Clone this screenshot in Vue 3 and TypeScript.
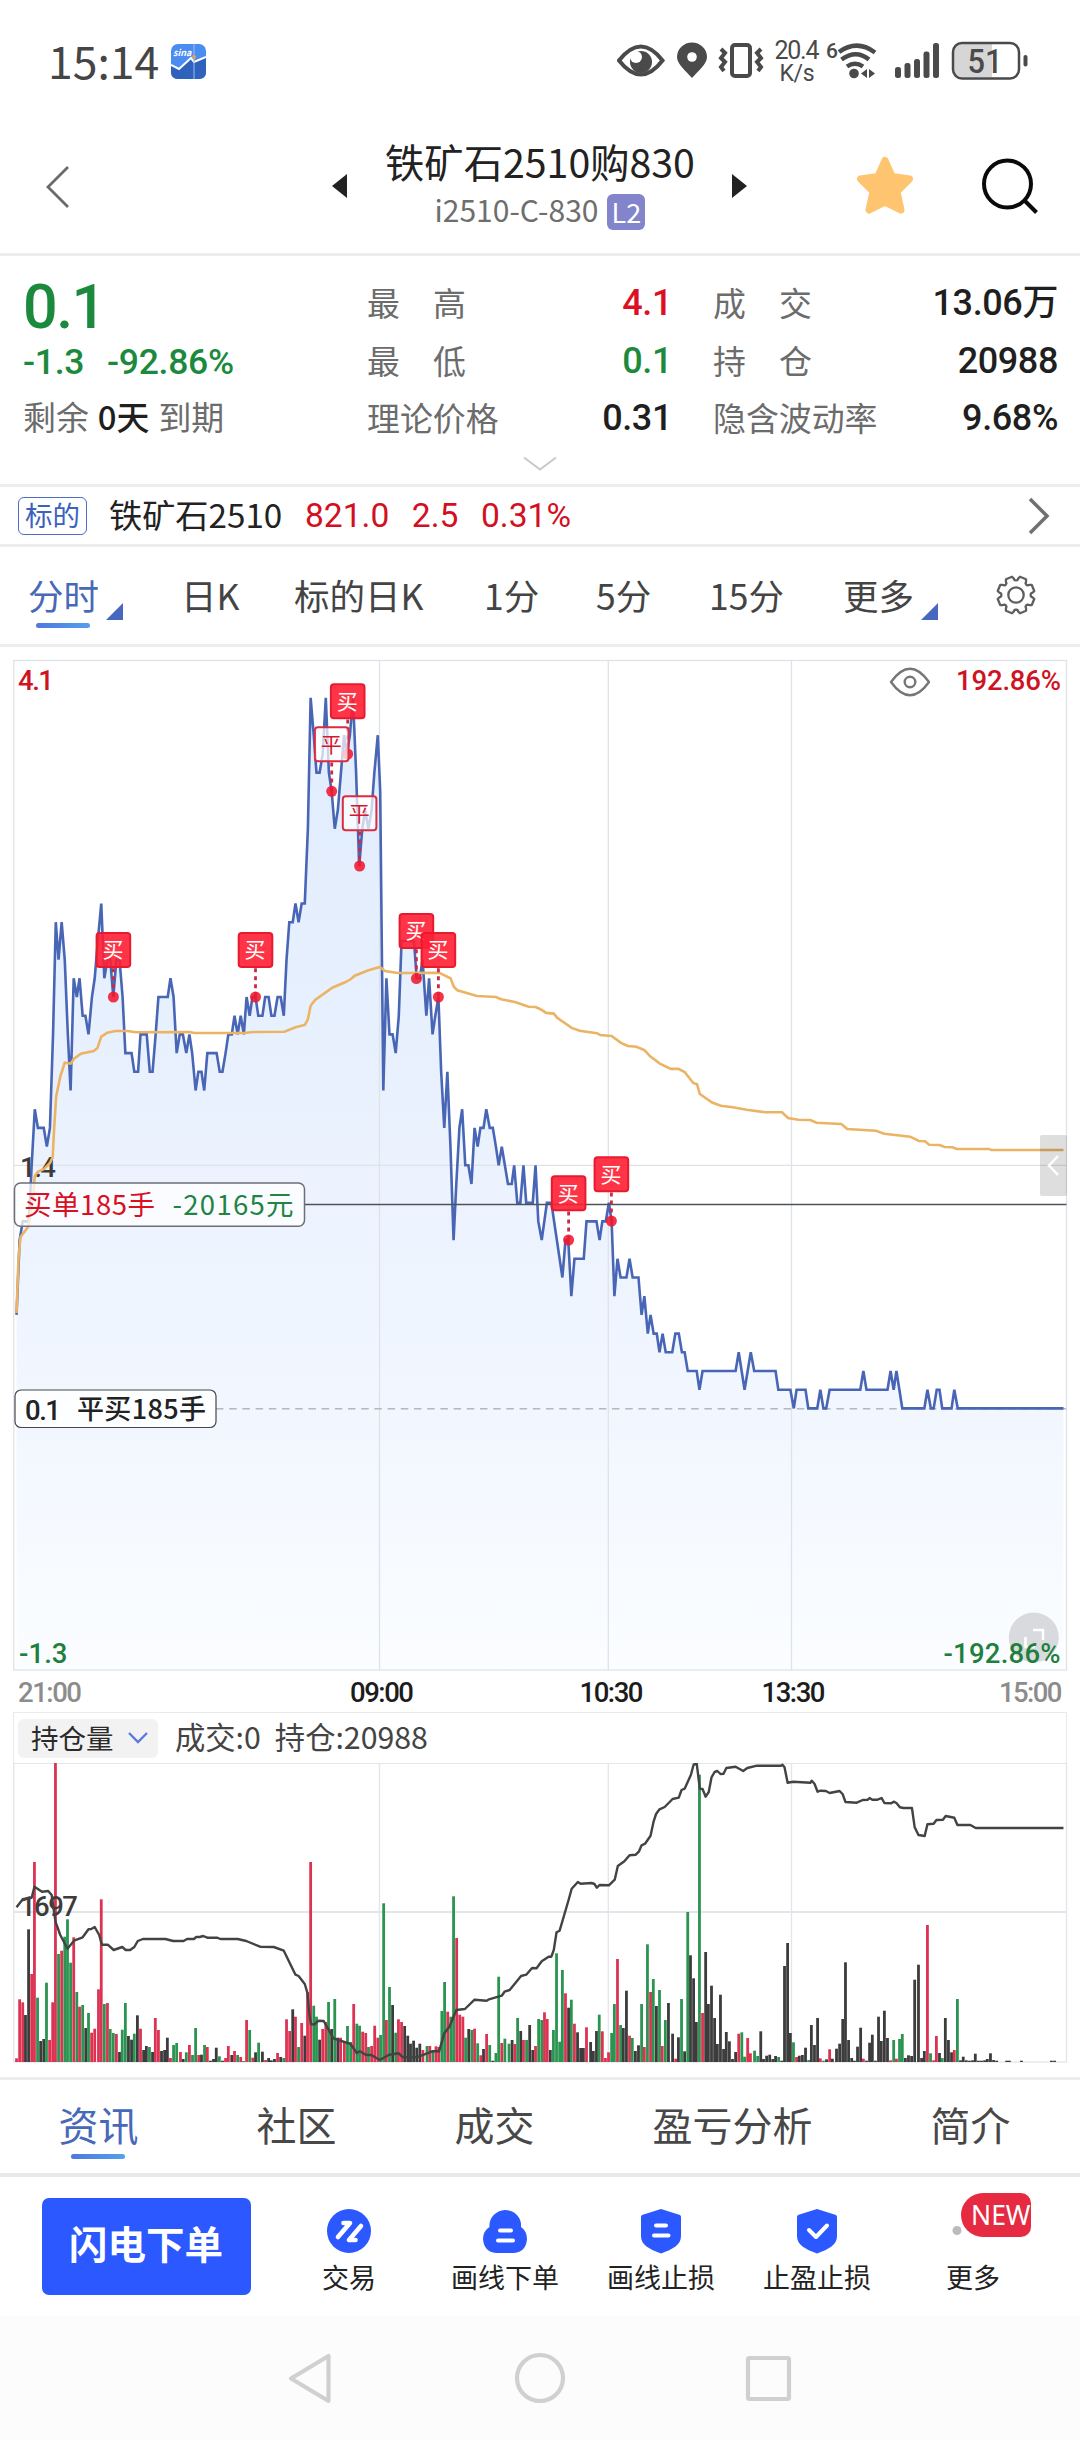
<script setup lang="ts">
interface Bar { x: number; y: number; h: number; c: string }
interface Mark { x: number; box: number; dot: number; kind: 'buy' | 'close' }
interface Tab { label: string; active?: boolean; corner?: boolean }

/* horizontal sampling: 3136 steps over the 1080px width */
const STEP = 1080 / 3136
const px = (v: number) => +(v * STEP).toFixed(2)
const pairs = (s: string): number[][] => s.trim().split(/\s+/).map(p => p.split(':').map(Number))

/* time:price */
const priceData = `48:.6 57:1 66:1.1 84:1.1 92:1.4 101:1.7 110:1.6 127:1.6 136:1.5 145:1.6 154:2.1 162:2.7 170:2.5 179:2.7 188:2.5 197:2.1
205:1.8 214:2.4 223:2.3 231:2.4 240:2.2 248:2.2 257:2.1 267:2.3 275:2.4 284:2.6 294:2.8 303:2.4 312:2.5 320:2.5 329:2.3 338:2.5 347:2.5
356:2.3 364:2 382:2 390:1.9 401:1.9 408:2.1 426:2.1 435:1.9 443:1.9 452:2.1 460:2.3 487:2.3 495:2.4 504:2.3 513:2 522:2.1 531:2.1 541:2
550:2.1 558:2 568:1.8 576:1.9 585:1.9 593:1.8 602:2 629:2 638:1.9 646:1.9 655:2 663:2.1 673:2.1 681:2.2 690:2.1 699:2.2 708:2.1 716:2.3
725:2.2 733:2.3 742:2.3 750:2.2 762:2.2 770:2.3 780:2.3 788:2.2 797:2.2 806:2.3 815:2.3 824:2.2 832:2.5 840:2.7 850:2.7 858:2.8 867:2.7
876:2.8 885:2.8 894:3.2 902:3.9 911:3.7 919:3.5 928:3.5 937:3.6 946:3.9 955:3.5 963:3.4 972:3.2 981:3.3 990:3.5 999:3.7 1007:3.6 1016:3.7
1025:3.9 1034:3.5 1043:3 1052:3.2 1060:3.3 1070:3.2 1079:3.3 1087:3.5 1097:3.7 1104:3.4 1113:1.8 1122:2.4 1131:2.1 1140:2.1 1149:2
1158:2.2 1166:2.6 1202:2.6 1210:2.4 1219:2.4 1227:2.5 1238:2.2 1246:2.4 1256:2.1 1264:2.2 1273:2.3 1281:1.9 1290:1.6 1299:1.9 1308:1.5
1317:1 1325:1.3 1334:1.6 1342:1.7 1351:1.4 1360:1.4 1369:1.3 1378:1.6 1387:1.5 1395:1.6 1404:1.6 1412:1.7 1422:1.6 1431:1.6 1440:1.5
1448:1.4 1457:1.5 1466:1.4 1475:1.3 1486:1.3 1493:1.4 1502:1.2 1511:1.2 1520:1.4 1528:1.2 1547:1.2 1555:1.4 1563:1.1 1573:1 1588:1.2
1601:1.2 1633:.8 1642:1 1650:1 1659:.7 1668:.9 1695:.9 1703:1.1 1732:1.1 1741:1 1749:1.1 1759:1.1 1768:1.2 1776:1.1 1784:.7 1793:.9
1802:.8 1819:.8 1828:.9 1837:.8 1854:.8 1863:.6 1871:.7 1881:.5 1889:.6 1898:.5 1907:.5 1915:.4 1924:.5 1933:.4 1952:.4 1961:.5 1971:.5
1980:.4 1988:.4 1997:.3 2023:.3 2031:.2 2040:.3 2136:.3 2145:.4 2162:.2 2180:.4 2190:.3 2252:.3 2260:.2 2295:.2 2305:.1 2313:.2 2339:.2
2347:.1 2373:.1 2382:.2 2391:.1 2399:.1 2409:.2 2498:.2 2507:.3 2516:.2 2577:.2 2586:.3 2595:.2 2603:.3 2620:.1 2684:.1 2693:.2 2703:.1
2711:.1 2720:.2 2728:.2 2736:.1 2763:.1 2771:.2 2781:.1 3088:.1`

/* time:vertical position */
const averageData = `48:1313 54:1256.7 60:1236.7 82:1226.7 95:1200 101:1176 110:1171.7 128:1169 145:1163 153:1157 157:1130 163:1096.7
175:1076.7 188:1062.7 205:1063.7 215:1058.7 235:1053.7 272:1051 283:1048 294:1036.7 312:1032.7 335:1031 370:1031 395:1032.3 550:1032
565:1033 710:1033 735:1032 826:1031.7 858:1027.3 885:1025 894:1019.3 902:1005.7 915:1000 965:987.7 1002:982.3 1018:979.3 1030:975.7
1070:970.3 1103:967 1118:971 1155:973 1275:972.7 1308:978.3 1318:986.7 1328:990.3 1385:996 1440:997 1455:999.3 1495:1002 1535:1006.7
1555:1007 1568:1009 1586:1012.9 1608:1013.6 1618:1017.9 1660:1027.9 1683:1030.7 1733:1033.2 1743:1035 1776:1036 1803:1042.9 1823:1046
1848:1046.8 1871:1050 1888:1056.4 1916:1063.6 1948:1068.9 1970:1068.9 1988:1072 2013:1083 2024:1084.3 2032:1094 2068:1102.5 2093:1105.7
2128:1107.3 2168:1109.7 2223:1112.3 2271:1112.3 2288:1118 2318:1119.7 2353:1120 2371:1122.7 2443:1124 2460:1129 2543:1130.7 2568:1133.7
2643:1136.7 2668:1141 2686:1141.3 2698:1144.7 2728:1145 2743:1147 2766:1147.3 2778:1149 2873:1149 2878:1150 3088:1150`

/* open interest, time:level */
const interestData = `48:922 66:898 92:893 100:860 122:875 140:873 150:885 161:965 175:1005 196:1046 215:1022 240:1012 257:988 265:987 275:981 288:1005
296:1034 313:1034 330:1050 355:1041 365:1050 378:1050 390:1041 400:1023 415:1017 480:1017 503:1023 533:1023 543:1017 563:1017 570:1011
580:1011 590:1008 602:1013 630:1013 640:1017 690:1017 715:1023 755:1040 795:1041 824:1052 858:1124 867:1128 885:1152 893:1180 898:1240
903:1272 912:1274 925:1262 940:1263 952:1285 968:1315 1018:1332 1036:1359 1045:1354 1062:1364 1078:1365 1103:1380 1130:1364 1158:1360
1170:1372 1210:1372 1255:1354 1275:1354 1290:1300 1305:1280 1325:1230 1350:1227 1378:1199 1413:1202 1420:1198 1457:1187 1465:1175 1480:1170
1513:1128 1528:1124 1545:1104 1558:1105 1573:1084 1593:1070 1601:1070 1608:1050 1616:997 1625:992 1651:900 1660:866 1678:846 1686:851
1718:849 1726:852 1733:863 1741:855 1768:856 1785:839 1794:798 1813:784 1828:766 1846:764 1855:755 1863:736 1873:731 1889:707 1898:664
1905:642 1915:628 1930:621 1953:597 1971:593 1979:570 1988:566 2006:525 2014:494 2023:490 2032:566 2040:567 2049:590 2058:576 2066:532
2075:516 2083:513 2092:522 2101:521 2109:504 2136:500 2158:513 2170:504 2198:497 2268:497 2272:494 2278:502 2287:548 2303:545 2353:548
2357:542 2365:551 2374:575 2383:572 2398:573 2409:579 2438:573 2447:583 2455:606 2488:608 2505:600 2520:599 2525:594 2533:599 2548:599
2560:594 2568:609 2588:610 2595:605 2603:609 2613:622 2623:624 2648:624 2656:682 2667:705 2685:708 2693:673 2711:671 2719:660 2738:659
2746:648 2771:653 2780:675 2818:675 2833:684 3088:684`

/* volume, time+colour+level: r rising, g falling, k flat */
const volumeData = `48r1375 57r1198 66r1207 74k1245 83k988 92r1122 100r786 109g1193 118k1323 127k1317 135g1148 144r1320 153r1207 161r486 170g1062
179r1052 188g1010 196g958 205g1088 214r1012 223g1176 231r1220 240g1215 249k1284 257g1239 266r1298 275r1286 286r1168 294r898 303g1212
312r1209 320g1287 329g1299 338r1302 347k1356 355g1289 364g1209 373k1308 382k1319 390g1301 399k1246 408r1286 417k1350 425k1338 434g1341
443k1356 451r1254 460r1290 469k1353 478k1350 486k1313 495r1374 504g1335 513g1329 524r1356 532k1377 541g1357 550r1335 559g1365 568g1284
577r1365 585k1364 594g1335 602r1341 611k1382 620k1377 628k1343 637g1369 646k1382 655r1374 663r1338 673k1365 681r1353 690g1365 699r1371
707g1383 716r1260 725g1290 734r1373 742k1357 751g1328 762k1355 771r1380 780k1374 788k1381 797k1377 806r1359 815k1371 824g1374 832r1258
841r1293 850k1228 858r1250 867g1341 876r1269 885k1307 893r1176 902r786 911g1217 919g1250 928k1319 937r1287 946r1266 954g1206 963k1287
972g1197 981k1313 989r1313 1000r1326 1009g1278 1018g1326 1027r1212 1036g1271 1044g1277 1053r1295 1062r1299 1070g1341 1079r1338 1088r1277
1097r1313 1105g1305 1114g910 1122r1260 1131g1161 1140k1215 1149g1298 1157r1258 1166r1266 1175k1278 1184k1307 1192k1331 1201k1322 1210k1343
1219k1331 1228r1350 1240g1338 1248r1338 1257g1350 1266r1339 1274r1341 1283g1233 1291g1146 1300r1235 1309g1250 1317g889 1326r1014 1335r1244
1344r1250 1352g1313 1361k1287 1370g1290 1378r1286 1387g1330 1396r1366 1404k1347 1413r1302 1422g1335 1431k1382 1440g1359 1448g1130
1457r1329 1466g1316 1478g1331 1487k1320 1495r1332 1503g1254 1512k1293 1520r1320 1529g1320 1538k1275 1547k1350 1555r1338 1564g1257
1573g1260 1581r1237 1589r1257 1598k1350 1607g1290 1616g1060 1625g1325 1633g1110 1642r1180 1651k1223 1659g1199 1668r1271 1677k1297
1686k1344 1694k1344 1703r1282 1715k1326 1723k1353 1732k1293 1740g1244 1749r1294 1758r1374 1767r1357 1776g1299 1784g1212 1793r1077
1802g1275 1810k1284 1819k1172 1828r1307 1836g1314 1845k1353 1854k1336 1863g1212 1871r1341 1880g1033 1889r1176 1897g1137 1906k1218
1915g1170 1923r1338 1932g1260 1941k1209 1953k1301 1962r1376 1970k1312 1979g1197 1988k1354 1997g936 2005k1066 2014k1135 2022k1266
2031g524 2040r1239 2049k1056 2057k1212 2066k1157 2075k1254 2083k1332 2092k1184 2101k1347 2109k1296 2118k1324 2127k1377 2136k1356
2145r1301 2154g1297 2162g1370 2171r1314 2179r1360 2191g1352 2200g1368 2209k1294 2217k1377 2226k1367 2235k1364 2244k1377 2252k1368
2261g1371 2270k1382 2278k1098 2287k1029 2295k1299 2304g1327 2313r1371 2321k1367 2330k1365 2339k1343 2348g1380 2356k1275 2365k1335
2374k1254 2382r1375 2391g1382 2400k1378 2409r1348 2417k1376 2429k1346 2438k1331 2447k1257 2455k1087 2464k1320 2473k1374 2481k1382
2490k1340 2499k1283 2507r1376 2516k1382 2525k1328 2533k1304 2542k1382 2551k1250 2559k1323 2568k1232 2577k1314 2586r1381 2595g1320
2603r1376 2612g1317 2620g1302 2629k1374 2638k1366 2647k1368 2656k1139 2667k1094 2676k1374 2684k1353 2693r975 2702g1360 2711r1381
2719r1308 2728k1359 2736g1374 2745k1254 2754k1320 2763k1357 2771r1350 2780g1197 2789k1381 2797k1370 2806k1381 2815k1382 2824k1381
2832k1361 2841k1382 2850k1382 2859k1381 2867k1377 2876k1360 2885k1380 2894k1382 2923k1382 2931k1382 2966k1382 3053k1382 3062k1382`

const colours: Record<string, string> = { r: '#dd3353', g: '#2b9450', k: '#3c3c3c' }
const priceY = (p: number) => +(1165.3 + (1.4 - p) * 187).toFixed(1)
const price = pairs(priceData).map(([t, p]) => `${px(t)},${priceY(p)}`).join(' ')
const area = `${px(48)},1670 ${price} ${px(3088)},1670`
const average = pairs(averageData).map(([t, y]) => `${px(t)},${y}`).join(' ')
const interest = pairs(interestData).map(([t, v]) => `${px(t)},${(1600 + v / 3).toFixed(1)}`).join(' ')
const bars: Bar[] = volumeData.trim().split(/\s+/).map(s => {
  const m = s.match(/(\d+)([rgk])(\d+)/)!
  const y = 1600 + Number(m[3]) / 3
  return { x: px(Number(m[1])) - 1.4, y: +y.toFixed(1), h: +(2062 - y).toFixed(1), c: colours[m[2]] }
})

const marks: Mark[] = [
  { x: 347.7, box: 683.5, dot: 754, kind: 'buy' },
  { x: 331.7, box: 726.5, dot: 791.3, kind: 'close' },
  { x: 359.6, box: 795.5, dot: 866, kind: 'close' },
  { x: 113.4, box: 932.3, dot: 997, kind: 'buy' },
  { x: 255.5, box: 932.3, dot: 997, kind: 'buy' },
  { x: 416.4, box: 913.3, dot: 978.6, kind: 'buy' },
  { x: 438.4, box: 932.3, dot: 997, kind: 'buy' },
  { x: 568.6, box: 1175.5, dot: 1240, kind: 'buy' },
  { x: 611.4, box: 1156.5, dot: 1221, kind: 'buy' },
]

const periods: Tab[] = [
  { label: '分时', active: true, corner: true }, { label: '日K' }, { label: '标的日K' },
  { label: '1分' }, { label: '5分' }, { label: '15分' }, { label: '更多', corner: true },
]
const sections: Tab[] = [
  { label: '资讯', active: true }, { label: '社区' }, { label: '成交' }, { label: '盈亏分析' }, { label: '简介' },
]
const actions = ['交易', '画线下单', '画线止损', '止盈止损', '更多']

const gear = (() => {
  const pts: string[] = []
  for (let i = 0; i < 8; i++) {
    for (const [d, r] of [[-14, 17], [-10, 18.7], [10, 18.7], [14, 17], [17, 15], [22.5, 14.6], [28, 15]]) {
      const a = ((i * 45 + 22.5 + d) * Math.PI) / 180
      pts.push(`${(20 + r * Math.sin(a)).toFixed(2)} ${(20 - r * Math.cos(a)).toFixed(2)}`)
    }
  }
  return `M${pts.join('L')}Z`
})()
</script>

<template>
  <main class="screen">
    <div class="status">
      <span class="clock">15:14</span>
      <svg class="app-icon" width="35" height="35" viewBox="0 0 35 35">
        <rect width="35" height="35" rx="7" fill="#4a8df0" />
        <path d="M0 21L8 25L20 14L23 18L35 13V28Q35 35 28 35H7Q0 35 0 28Z" fill="#2f62bd" />
        <path d="M0 21L8 25L20 14L23 18L35 13" fill="none" stroke="#fff" stroke-width="2" />
        <path d="M23 0V35" stroke="#9bbdf2" stroke-width="1" />
        <circle cx="23" cy="13" r="2" fill="#e9a157" />
        <text x="2" y="12" font-size="9" font-style="italic" font-weight="700" fill="#fff">sina</text>
      </svg>
      <svg class="sys" width="412" height="50" viewBox="617 36 412 50" fill="none" stroke="#4a4a4a">
        <path d="M619 60.500Q641 32.500 662.500 60.500Q641 88.500 619 60.500Z" stroke-width="4" />
        <circle cx="641" cy="62" r="11" fill="#4a4a4a" stroke="none" />
        <circle cx="636" cy="57" r="6" fill="#fff" stroke="none" />
        <path d="M692 78C686 71 677 64 677 57A15 14.500 0 0 1 707 57C707 64 698 71 692 78Z" fill="#4a4a4a" stroke="none" />
        <circle cx="692" cy="57" r="4.800" fill="#fff" stroke="none" />
        <rect x="732" y="45" width="18" height="31" rx="3" stroke-width="4" />
        <path d="M721 49l4 4l-4 5l4 4l-4 5l3 4M761 49l-4 4l4 5l-4 4l4 5l-3 4" stroke-width="4" />
        <g fill="#4a4a4a" stroke="none">
          <text x="774.500" y="59" font-size="25" textLength="45">20.4</text>
          <text x="779.500" y="81" font-size="23" textLength="35">K/s</text>
          <text x="826" y="58" font-size="21" font-weight="500" textLength="11">6</text>
          <circle cx="854" cy="73.500" r="4.800" />
          <path d="M867 69v9l-6-4.500zM869 69v9l6-4.500z" />
          <rect x="895" y="67" width="6" height="11" rx="2.500" />
          <rect x="904.500" y="63" width="6" height="15" rx="2.500" />
          <rect x="914" y="59" width="6" height="19" rx="2.500" />
          <rect x="923.500" y="51.500" width="6" height="26.500" rx="2.500" />
          <rect x="933" y="43" width="6" height="35" rx="2.500" />
          <path d="M962 44H992V77H962Q954 77 954 69V52Q954 44 962 44Z" fill="#d6d6d6" />
          <rect x="1023.500" y="55" width="4" height="11.500" rx="2" />
        </g>
        <path d="M839 52Q857 39 875 52.500M841.500 59.500Q856 49 869 59.500M847 66.500Q855 61 863 66.500" stroke-width="4.500" />
        <rect x="953" y="43" width="66" height="35.500" rx="9" stroke-width="2.500" />
        <text x="967.500" y="73" font-size="33" font-weight="500" fill="#4a4a4a" stroke="none" textLength="35" lengthAdjust="spacingAndGlyphs">51</text>
      </svg>
    </div>

    <header class="head">
      <svg class="back" width="26" height="44" viewBox="0 0 26 44"><path d="M23 2L3 22L23 42" fill="none" stroke="#6a6a6a" stroke-width="2.800" /></svg>
      <svg class="prev" width="16" height="26" viewBox="0 0 16 26"><path d="M15 1V25L0 13Z" fill="#222" /></svg>
      <div class="name">
        <h1>铁矿石2510购830</h1>
        <p><span>i2510-C-830</span><b>L2</b></p>
      </div>
      <svg class="next" width="16" height="26" viewBox="0 0 16 26"><path d="M0 1V25L15 13Z" fill="#222" /></svg>
      <svg class="star" width="60" height="60" viewBox="0 0 60 60"><path d="M30 4.500L37.200 20.500L54.500 23L42 35.500L46 54L30 46L14 54L18 35.500L5.500 23L22.800 20.500Z" fill="#ffc46f" stroke="#ffc46f" stroke-width="7" stroke-linejoin="round" /></svg>
      <svg class="search" width="60" height="60" viewBox="0 0 60 60" fill="none" stroke="#0a0a0a" stroke-width="4"><circle cx="27.500" cy="27" r="23.500" /><path d="M44 43L56.500 55.500" /></svg>
    </header>

    <section class="quote">
      <div class="q-left">
        <strong class="big">0.1</strong>
        <p class="chg"><span>-1.3</span><span>-92.86%</span></p>
        <p class="left-days">剩余<b>0天</b>到期</p>
      </div>
      <dl class="q-mid">
        <dt class="wide">最高</dt><dd class="up">4.1</dd>
        <dt class="wide">最低</dt><dd class="down">0.1</dd>
        <dt>理论价格</dt><dd>0.31</dd>
      </dl>
      <dl class="q-right">
        <dt class="wide">成交</dt><dd>13.06万</dd>
        <dt class="wide">持仓</dt><dd>20988</dd>
        <dt>隐含波动率</dt><dd>9.68%</dd>
      </dl>
      <svg class="fold" width="34" height="16" viewBox="0 0 34 16"><path d="M1 1.500L17 13.500L33 1.500" fill="none" stroke="#c9c9c9" stroke-width="2" /></svg>
    </section>

    <section class="under">
      <span class="badge">标的</span>
      <span class="u-name">铁矿石2510</span>
      <span class="u-num">821.0</span><span class="u-num">2.5</span><span class="u-num">0.31%</span>
      <svg width="22" height="38" viewBox="0 0 22 38"><path d="M2 2L19 19L2 36" fill="none" stroke="#707070" stroke-width="3.500" /></svg>
    </section>

    <nav class="periods">
      <div v-for="p in periods" :key="p.label" class="period" :class="{ on: p.active }">
        <span>{{ p.label }}</span>
        <svg v-if="p.corner" width="17" height="17" viewBox="0 0 17 17"><path d="M17 0V17H0Z" fill="#4868c0" /></svg>
      </div>
      <svg class="gear" width="40" height="40" viewBox="0 0 40 40" fill="none" stroke="#5f5f5f" stroke-width="2.300" stroke-linejoin="round"><path :d="gear" /><circle cx="20" cy="20" r="7.700" /></svg>
    </nav>

    <svg class="chart" width="1080" height="1065" viewBox="0 647 1080 1065">
      <defs>
        <linearGradient id="areaFill" gradientUnits="userSpaceOnUse" x1="0" y1="698" x2="0" y2="1670">
          <stop offset="0" stop-color="#e0ecfd" /><stop offset=".4" stop-color="#e9f1fe" />
          <stop offset=".75" stop-color="#f2f7ff" /><stop offset="1" stop-color="#fbfdff" />
        </linearGradient>
      </defs>
      <polygon :points="area" fill="url(#areaFill)" />
      <g stroke="#dfe3e8" stroke-width="1.300" fill="none">
        <rect x="13.800" y="660.500" width="1052.700" height="1009.500" />
        <path d="M379.500 660V1670M608.300 660V1670M791.500 660V1670M14 1165.300H1066" />
      </g>
      <path d="M216 1408.700H1066" stroke="#b4b7bb" stroke-width="1.500" stroke-dasharray="7.500 5.700" />
      <polyline :points="price" fill="none" stroke="#4866b5" stroke-width="2.600" stroke-linejoin="miter" stroke-miterlimit="2" />
      <text x="20" y="1177" textLength="36" class="num" fill="#3c3c3c">1.4</text>
      <polyline :points="average" fill="none" stroke="#ebb364" stroke-width="2.600" />
      <path d="M305 1204.500H1066.500" stroke="#4f5359" stroke-width="1.300" />
      <g v-for="(m, i) in marks" :key="i">
        <path :d="`M${m.x} ${m.box + 36}V${m.dot}`" stroke="#c92a48" stroke-width="2.800" stroke-dasharray="4 4" />
        <circle :cx="m.x" :cy="m.dot" r="5.500" fill="#f0182f" fill-opacity=".88" />
        <rect :x="m.x - 16.800" :y="m.box + .8" width="33.600" height="34" rx="3" stroke-width="2"
          :fill="m.kind === 'buy' ? '#ff1f33' : '#ffffff'" :fill-opacity="m.kind === 'buy' ? .9 : .72"
          :stroke="m.kind === 'buy' ? '#e81a30' : '#dc2c42'" />
        <text :x="m.x - .4" :y="m.box + 25" text-anchor="middle" font-size="21" :fill="m.kind === 'buy' ? '#fff' : '#d4182c'">{{ m.kind === 'buy' ? '买' : '平' }}</text>
      </g>
      <rect x="14.500" y="1183" width="290" height="43.300" rx="6" fill="#fff" fill-opacity=".75" stroke="#6c6f75" stroke-width="1.500" />
      <text x="24" y="1215" font-size="27.500" textLength="131" fill="#d9101f">买单185手</text>
      <text x="172.500" y="1215" font-size="27.500" textLength="121" fill="#218442">-20165元</text>
      <rect x="15" y="1390" width="201" height="37.500" rx="6" fill="#fff" fill-opacity=".85" stroke="#44474c" stroke-width="1.200" />
      <text x="25" y="1419.500" textLength="36" class="num" fill="#222">0.1</text>
      <text x="77" y="1419" font-size="27" font-weight="500" textLength="129" fill="#222">平买185手</text>
      <rect x="1040" y="1135" width="27" height="61" rx="2" fill="#000" fill-opacity=".13" />
      <path d="M1058 1156L1049 1165.500L1058 1175" fill="none" stroke="#fff" stroke-width="2.500" />
      <circle cx="1033.800" cy="1637.500" r="25" fill="#d9dade" />
      <path d="M1033 1630H1043V1640M1025.500 1637V1647H1035" fill="none" stroke="#fff" stroke-width="2.500" />
      <g class="num">
        <text x="18" y="690" textLength="36" fill="#cf1322">4.1</text>
        <text x="956" y="686" textLength="105" dy="4" fill="#cf1322">192.86%</text>
        <text x="19" y="1662.700" textLength="48.500" fill="#1f7f3c">-1.3</text>
        <text x="943.500" y="1662.700" textLength="117" fill="#1f7f3c">-192.86%</text>
        <text x="18" y="1702" textLength="64" fill="#8c8c8c">21:00</text>
        <text x="350" y="1702" textLength="64" fill="#1c1c1c">09:00</text>
        <text x="579.500" y="1702" textLength="64" fill="#1c1c1c">10:30</text>
        <text x="761.500" y="1702" textLength="64" fill="#1c1c1c">13:30</text>
        <text x="999" y="1702" textLength="63.500" fill="#8c8c8c">15:00</text>
      </g>
      <g fill="none" stroke="#767676" stroke-width="2.400"><path d="M891 682Q910 655.500 929 682Q910 708.500 891 682Z" stroke-linejoin="round" /><circle cx="910" cy="682" r="5.300" /></g>
    </svg>

    <div class="vol-head">
      <span class="chip"><i>持仓量</i><svg width="22" height="14" viewBox="0 0 22 14"><path d="M2 2L11 11L20 2" fill="none" stroke="#5b7bd8" stroke-width="2.400" /></svg></span>
      <span class="stat">成交:0</span><span class="stat">持仓:20988</span>
    </div>
    <svg class="volume" width="1080" height="314" viewBox="0 1763 1080 314">
      <g stroke="#e2e5e9" stroke-width="1.300" fill="none">
        <rect x="13.800" y="1763.300" width="1052.700" height="298.700" />
        <path d="M379.500 1763V2062M608.300 1763V2062M791.500 1763V2062" /><path d="M14 1912H1066" stroke-width="2" />
      </g>
      <rect v-for="(b, i) in bars" :key="i" :x="b.x" :y="b.y" width="2.800" :height="b.h" :fill="b.c" />
      <text x="20" y="1915.700" textLength="58" class="num" fill="#3c3c3c">1697</text>
      <polyline :points="interest" fill="none" stroke="#434343" stroke-width="2.400" stroke-linejoin="round" />
    </svg>

    <nav class="sections">
      <span v-for="s in sections" :key="s.label" :class="{ on: s.active }">{{ s.label }}</span>
    </nav>

    <footer class="actions">
      <button>闪电下单</button>
      <div v-for="(a, i) in actions" :key="a" class="action">
        <svg width="44" height="46" viewBox="0 0 44 46" fill="#2b58ff">
          <template v-if="i === 0"><circle cx="22" cy="23" r="22" /><g fill="none" stroke="#fff" stroke-width="4.600" stroke-linecap="round" stroke-linejoin="round"><path d="M11 29L23 15H16.500M34 18L22 32H28.500" /></g></template>
          <template v-else-if="i === 1"><path d="M22 2A16 15.500 0 0 1 38 19Q44 23 44 31Q43 44 31 45H13Q1 44 0 31Q0 23 6.500 19A16 15.500 0 0 1 22 2Z" /><path d="M17 22.500H28M15 32.500H30" stroke="#fff" stroke-width="4" stroke-linecap="round" /></template>
          <template v-else-if="i === 4"><circle cx="6" cy="22.500" r="4.500" fill="#bbb" /></template>
          <template v-else><path d="M22 1L41 7Q42 8 42 9V28C42 37 34 41 22 45.500C10 41 2 37 2 28V9Q2 8 3 7Z" />
            <path v-if="i === 2" d="M17 17.500H27M15 27.500H29.500" stroke="#fff" stroke-width="4" stroke-linecap="round" />
            <path v-else d="M14 22L21 29L32 17.500" fill="none" stroke="#fff" stroke-width="4" stroke-linecap="round" stroke-linejoin="round" /></template>
        </svg>
        <span>{{ a }}</span>
        <em v-if="i === 4">NEW</em>
      </div>
    </footer>

    <div class="sysnav">
      <svg width="504" height="56" viewBox="288 2350 504 56" fill="none" stroke="#d0d0d0" stroke-width="4.200" stroke-linejoin="round">
        <path d="M291 2378.500L328.500 2356V2401Z" /><circle cx="540" cy="2378" r="23" /><rect x="748" y="2358" width="41" height="41" rx="1.500" />
      </svg>
    </div>
  </main>
</template>

<style>
body { margin: 0; background: #fff; }
</style>

<style scoped>
.screen { width: 1080px; height: 2440px; overflow: hidden; background: #fff; color: #222; font-family: "Noto Sans CJK SC", "Noto Sans", sans-serif; display: flex; flex-direction: column; }
.screen > * { box-sizing: border-box; flex: none; }
h1, p, dl, dt, dd { margin: 0; font-weight: 400; }
svg { display: block; }
.status { height: 122px; display: flex; align-items: flex-start; padding: 36px 51px 0 48px; }
.clock { font-size: 44.500px; line-height: 47px; width: 123px; color: #454545; }
.app-icon { margin-top: 8px; }
.sys { margin-left: auto; font-family: Roboto, sans-serif; }
.head { height: 134px; border-bottom: 3px solid #ededed; display: flex; align-items: flex-start; }
.back { margin: 43px 0 0 45px; }
.prev { margin: 51px 0 0 261px; }
.name { width: 384px; text-align: center; }
.name h1 { font-size: 39.300px; line-height: 56px; margin-top: 11px; white-space: nowrap; }
.name p { font-size: 30px; line-height: 36px; margin-top: 5px; color: #6e6e6e; display: flex; justify-content: center; align-items: flex-start; gap: 9px; }
.name p span { line-height: 30px; }
.name b { font-weight: 400; font-size: 27px; width: 38px; height: 36px; line-height: 35px; border-radius: 6px; background: #8284cc; color: #fff; }
.next { margin-top: 51px; }
.star { margin: 34px 0 0 107px; }
.search { margin: 35px 0 0 65px; }
.quote { height: 231px; border-bottom: 3px solid #ededed; display: grid; grid-template-columns: 345px 323px 388px; position: relative; font-size: 32.900px; }
.q-left { padding: 14px 0 0 23px; }
.big { display: block; font: 500 61px/74px Roboto, sans-serif; color: #1c8a3d; letter-spacing: -1.500px; height: 63px; }
.chg { display: flex; gap: 23px; font: 500 35.500px/58px Roboto, sans-serif; color: #1c8a3d; letter-spacing: -.3px; height: 57px; }
.left-days { line-height: 52px; color: #6c6c6c; white-space: nowrap; }
.left-days b { font-weight: 500; color: #1f1f1f; margin: 0 9px; }
dl { display: grid; grid-template-rows: 58px 58px 57px; align-items: center; padding-top: 18px; }
.q-mid { grid-template-columns: 140px 165px; padding-left: 22px; }
.q-right { grid-template-columns: 170px 175px; padding-left: 45px; }
dt { color: #6c6c6c; white-space: nowrap; padding-bottom: 4px; }
dt.wide { letter-spacing: 33px; }
dd { text-align: right; font-family: Roboto, "Noto Sans CJK SC", sans-serif; font-size: 36px; font-weight: 500; letter-spacing: -.4px; color: #1f1f1f; white-space: nowrap; line-height: 50px; padding-bottom: 1px; }
.up { color: #dc1022; }
.down { color: #1c8a3d; }
.fold { position: absolute; left: 523px; bottom: 12px; }
.under { height: 60px; border-bottom: 3px solid #ededed; display: flex; align-items: center; padding: 0 30px 0 18px; }
.badge { box-sizing: border-box; width: 69px; height: 38px; border: 1.500px solid #4b6dc6; border-radius: 6px; font-size: 27.500px; line-height: 33px; text-align: center; color: #3d62bd; }
.u-name { font-size: 33.200px; line-height: 50px; width: 196px; margin-left: 22px; padding-bottom: 3px; white-space: nowrap; }
.u-num { font: 400 33.600px Roboto, sans-serif; color: #d2101f; margin-right: 22.500px; }
.under svg { margin-left: auto; }
.periods { height: 100px; border-bottom: 3px solid #ededed; display: grid; grid-template-columns: 153px 113px 190px 112px 113px 134px 152px 50px; padding-left: 28px; font-size: 35.500px; color: #444; }
.period { position: relative; padding-top: 20px; line-height: 55px; white-space: nowrap; }
.period.on { color: #4868b8; }
.period.on::after, .sections .on::after { content: ''; position: absolute; left: 8px; top: 76px; width: 54px; height: 5px; border-radius: 3px; background: linear-gradient(90deg, #4f78dc, #55a0ee); }
.period svg { position: absolute; left: 78px; top: 56px; }
.gear { margin: 28px 0 0 1px; }
.num { font-family: Roboto, sans-serif; font-size: 27.500px; font-weight: 500; }
.chart, .volume { font-family: "Noto Sans CJK SC", sans-serif; }
.vol-head { height: 51px; margin: 0 13px; border: 1.300px solid #e9eaec; border-bottom: 0; display: flex; align-items: center; padding-left: 4px; font-size: 30.300px; color: #444; white-space: nowrap; }
.chip { box-sizing: border-box; width: 140px; height: 39px; border-radius: 6px; background: #f2f2f2; display: flex; align-items: center; justify-content: space-between; padding: 0 9px 0 13px; font-size: 27.500px; color: #2b2b2b; margin-right: 17px; }
.chip i { font-style: normal; line-height: 36px; padding-bottom: 3px; }
.stat { line-height: 40px; padding-bottom: 4px; }
.stat + .stat { margin-left: 14px; }
.sections { height: 100px; border-top: 3px solid #ededed; border-bottom: 4px solid #e9e9e9; display: flex; gap: 118px; padding-left: 58.500px; font-size: 40px; line-height: 89px; color: #484848; white-space: nowrap; }
.sections span { position: relative; }
.sections .on { color: #4868b8; }
.sections .on::after { left: 12px; top: 74px; }
.actions { height: 139px; display: flex; padding-left: 42px; }
button { width: 209px; height: 97px; margin: 21px 20px 0 0; border: 0; border-radius: 7px; background: #2b58ff; color: #fff; font: 700 38.500px/88px "Noto Sans CJK SC", sans-serif; padding: 0 1px 9px 0; }
.action { position: relative; width: 156px; display: flex; flex-direction: column; align-items: center; padding-top: 31px; font-size: 27px; line-height: 40px; }
.action span { margin-top: 3px; }
.action em { position: absolute; left: 66px; top: 16px; width: 70px; height: 44px; box-sizing: border-box; padding-left: 10px; overflow: hidden; border-radius: 22px 10px 10px 22px; background: #e52a42; color: #fff; font: 400 26.500px/45px "Noto Sans", sans-serif; }
.sysnav { flex: 1; background: #fcfcfc; display: flex; justify-content: center; padding-top: 34px; }
</style>
